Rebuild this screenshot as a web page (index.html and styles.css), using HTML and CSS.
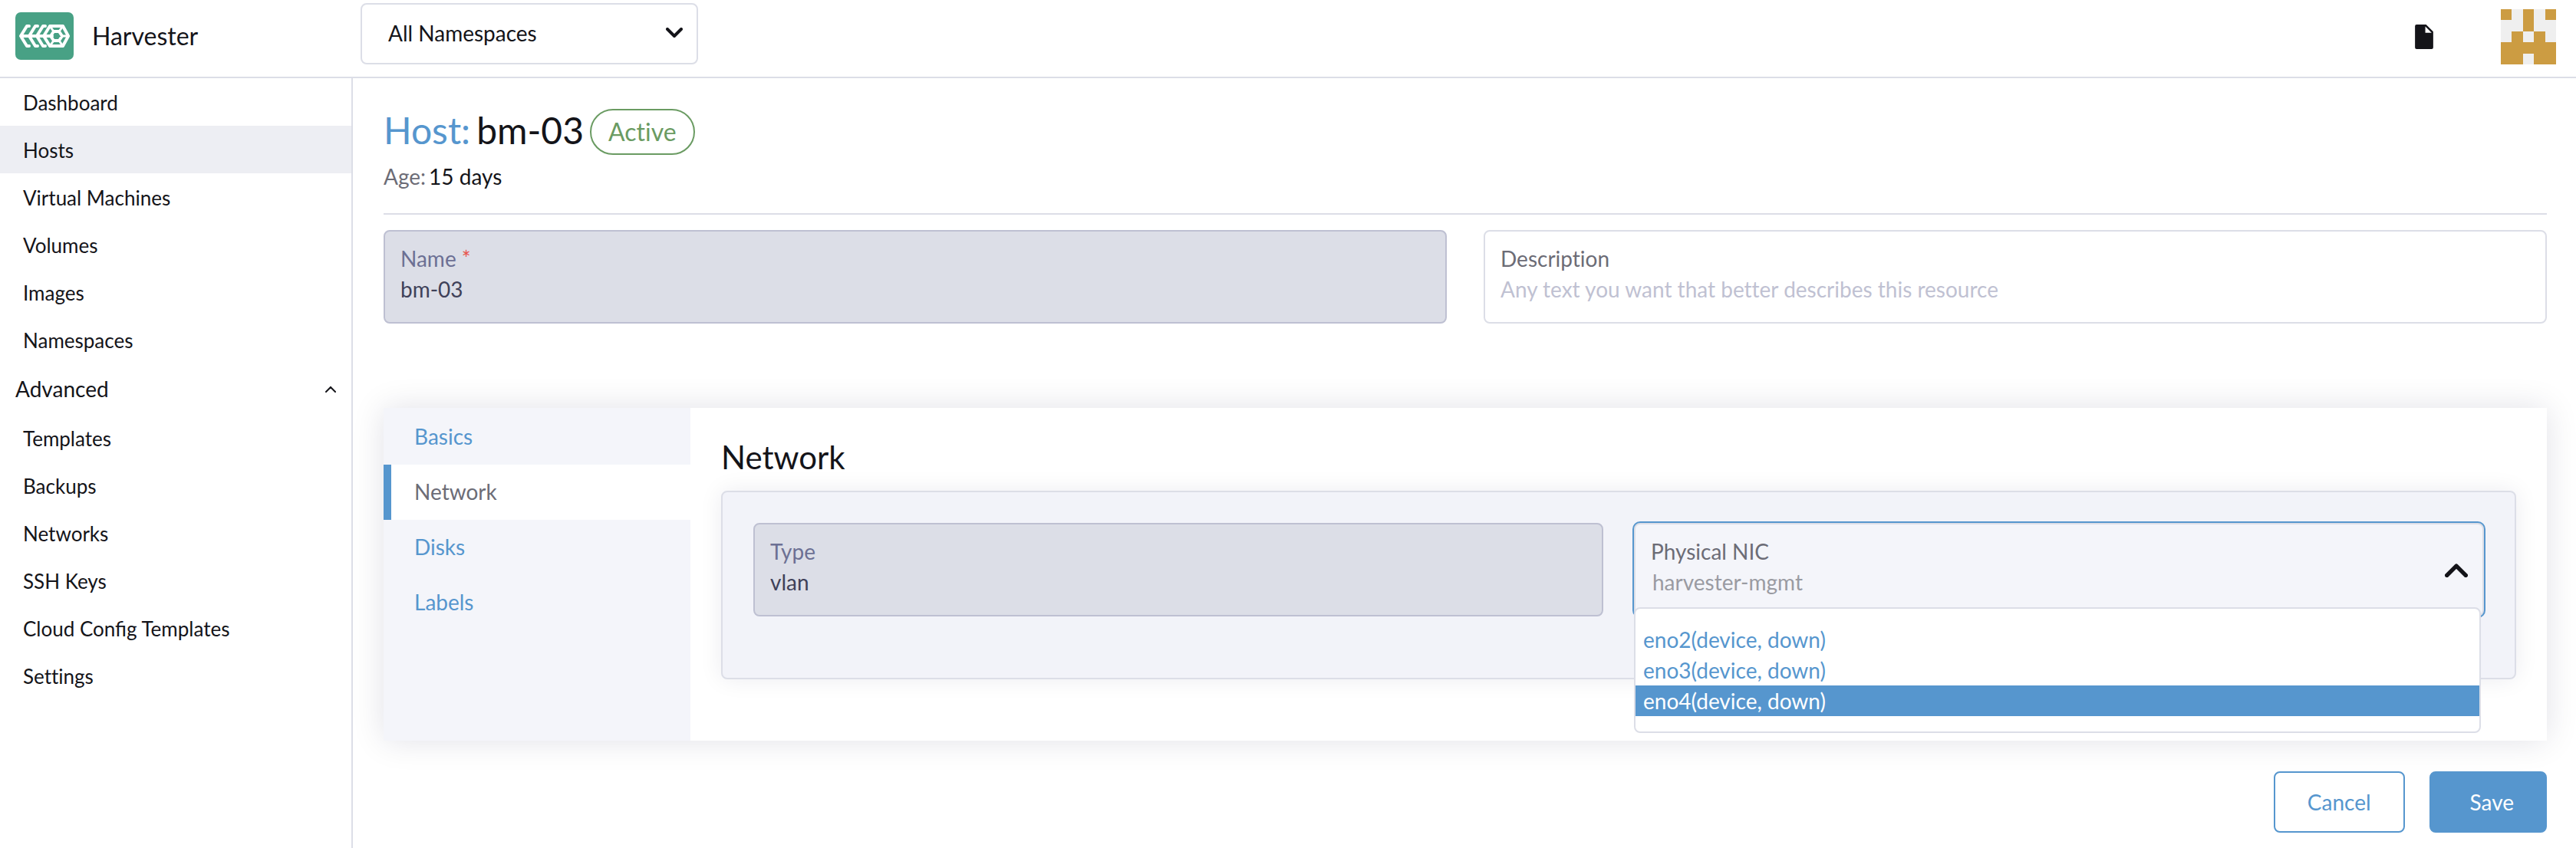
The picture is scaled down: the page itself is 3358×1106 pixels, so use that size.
FILE: index.html
```html
<!DOCTYPE html>
<html lang="en">
<head>
<meta charset="utf-8">
<title>Harvester - Host bm-03</title>
<link rel="stylesheet" href="styles.css">
</head>
<body>
<header class="topbar">
  <a class="brand" href="#">
    <svg class="brand-logo" viewBox="0 0 76 62" aria-hidden="true">
      <rect width="76" height="62" rx="7" fill="#48a185"/>
      <g fill="none" stroke="#fff" stroke-width="4" stroke-linecap="round" stroke-linejoin="round">
        <path d="M7 31H48M18 18H15L7 31L15 44H18M29 18H26L18 31L26 44H29M39 18H36L28 31L36 44H39"/>
        <path d="M45 18H62L69 31L62 44H45L37 31Z"/>
        <path d="M50 25H57L61 31L57 37H50L46 31Z"/>
        <path d="M45 18L50 25M62 18L57 25M62 44L57 37M45 44L50 37M61 31H69" stroke-width="3"/>
      </g>
    </svg>
    <span>Harvester</span>
  </a>
  <div class="namespace">
    <select class="namespace-select" aria-label="Namespace"><option>All Namespaces</option></select>
    <svg class="chevron" viewBox="0 0 22 14" aria-hidden="true"><path d="M2 2L11 11L20 2"/></svg>
  </div>
  <div class="tools">
    <a class="docs" href="#" aria-label="Documentation">
      <svg viewBox="0 0 23 31" aria-hidden="true"><path fill="#141419" fill-rule="evenodd" d="M2 0H14L23 9V29Q23 31 21 31H2Q0 31 0 29V2Q0 0 2 0ZM13 2.500V10.500H21Z"/></svg>
    </a>
    <svg class="avatar" viewBox="0 0 5 5" shape-rendering="crispEdges" role="img" aria-label="User">
      <rect width="5" height="5" fill="#efefef"/>
      <path fill="#cc9c42" d="M0 0H1V1H0ZM2 0H3V2H2ZM4 0H5V1H4ZM1 2H2V3H3V2H4V3H5V5H3V4H2V5H0V3H1Z"/>
    </svg>
  </div>
</header>
<div class="layout">
  <nav class="sidenav" aria-label="Main">
    <a href="#">Dashboard</a>
    <a class="current" href="#">Hosts</a>
    <a href="#">Virtual Machines</a>
    <a href="#">Volumes</a>
    <a href="#">Images</a>
    <a href="#">Namespaces</a>
    <button class="group-toggle" type="button" aria-expanded="true">
      <span>Advanced</span>
      <svg viewBox="0 0 14 9" aria-hidden="true"><path d="M1 8L7 2L13 8"/></svg>
    </button>
    <a href="#">Templates</a>
    <a href="#">Backups</a>
    <a href="#">Networks</a>
    <a href="#">SSH Keys</a>
    <a class="ligatures" href="#">Cloud Config Templates</a>
    <a href="#">Settings</a>
  </nav>
  <main class="content">
    <div class="masthead">
      <h1><a href="#">Host:</a><span>bm-03</span></h1>
      <span class="badge">Active</span>
    </div>
    <p class="age"><span class="age-label">Age:</span><span>15 days</span></p>
    <form>
      <div class="fields identity">
        <div class="field disabled">
          <label for="name">Name <span class="required">*</span></label>
          <input id="name" value="bm-03" disabled>
        </div>
        <div class="field">
          <label for="description">Description</label>
          <input id="description" placeholder="Any text you want that better describes this resource">
        </div>
      </div>
      <section class="tabbed">
        <div class="tabs">
          <a href="#">Basics</a>
          <a class="active" href="#">Network</a>
          <a href="#">Disks</a>
          <a href="#">Labels</a>
        </div>
        <div class="panel">
          <h2>Network</h2>
          <div class="fields group">
            <div class="field disabled">
              <label for="type">Type</label>
              <input id="type" value="vlan" disabled>
            </div>
            <div class="field open">
              <label for="nic">Physical NIC</label>
              <select id="nic"><option>harvester-mgmt</option></select>
              <svg class="chevron" viewBox="0 0 22 14" aria-hidden="true"><path d="M2 12L11 3L20 12"/></svg>
              <ul class="menu" role="listbox" aria-label="Physical NIC">
                <li role="option">eno2(device, down)</li>
                <li role="option">eno3(device, down)</li>
                <li class="highlight" role="option" aria-selected="true">eno4(device, down)</li>
              </ul>
            </div>
          </div>
        </div>
      </section>
      <div class="actions">
        <button class="btn cancel" type="button">Cancel</button>
        <button class="btn save" type="button">Save</button>
      </div>
    </form>
  </main>
</div>
</body>
</html>
```
FILE: styles.css
```css
:root {
  --text: #141419;
  --muted: #6c6c76;
  --link: #5696ce;
  --border: #dcdee7;
  --panel: #f4f5fa;
}

* {
  box-sizing: border-box;
}

body {
  margin: 0;
  min-height: 100vh;
  display: flex;
  flex-direction: column;
  background: #fff;
  color: var(--text);
  font: 28px/40px Lato, sans-serif;
  font-variant-ligatures: none;
}

a {
  color: var(--link);
  text-decoration: none;
}

h1,
h2,
p,
ul {
  margin: 0;
  padding: 0;
  font-weight: 400;
}

input,
select,
button {
  font: inherit;
  font-variant-ligatures: none;
  color: inherit;
}

.topbar {
  display: flex;
  align-items: flex-start;
  height: 102px;
  border-bottom: 2px solid var(--border);
}

.brand {
  display: flex;
  align-items: center;
  gap: 24px;
  width: 470px;
  padding: 16px 20px;
  color: var(--text);
  font-size: 32px;
}

.brand-logo {
  width: 76px;
  height: 62px;
}

.namespace {
  position: relative;
  width: 440px;
  margin-top: 4px;
}

.namespace-select {
  appearance: none;
  display: block;
  width: 100%;
  height: 80px;
  padding: 0 34px 2px;
  border: 2px solid var(--border);
  border-radius: 8px;
  background: #fff;
}

.chevron {
  position: absolute;
  fill: none;
  stroke: var(--text);
  stroke-width: 4;
  stroke-linecap: round;
  stroke-linejoin: round;
  pointer-events: none;
}

.namespace .chevron {
  top: 32px;
  right: 20px;
  width: 22px;
}

.tools {
  display: flex;
  align-items: center;
  gap: 88px;
  margin-left: auto;
  padding: 12px 26px 0 0;
}

.docs svg {
  display: block;
  width: 24px;
  height: 32px;
}

.avatar {
  width: 72px;
  height: 72px;
}

.layout {
  display: flex;
  flex: 1;
}

.sidenav {
  flex: 0 0 460px;
  border-right: 2px solid var(--border);
  font-size: 26px;
}

.sidenav a {
  display: block;
  padding: 2px 30px 0;
  color: var(--text);
  line-height: 60px;
}

.sidenav .current {
  background: #edeef3;
}

.ligatures {
  font-variant-ligatures: normal;
}

.group-toggle {
  display: flex;
  align-items: center;
  justify-content: space-between;
  width: 100%;
  height: 66px;
  padding: 0 20px;
  border: 0;
  background: none;
  font-size: 28px;
}

.group-toggle svg {
  width: 14px;
  fill: none;
  stroke: var(--text);
  stroke-width: 2;
  stroke-linecap: round;
}

.content {
  flex: 1;
  min-width: 0;
  padding: 40px 38px 20px 40px;
}

.masthead {
  display: flex;
  align-items: center;
  gap: 8px;
}

h1 {
  display: flex;
  gap: 8px;
  padding-bottom: 4px;
  font-size: 48px;
  line-height: 56px;
}

.badge {
  padding: 0 22px;
  border: 2px solid #6a9b62;
  border-radius: 30px;
  color: #6a9b62;
  font-size: 32px;
  line-height: 56px;
}

.age {
  display: flex;
  gap: 4px;
  padding: 8px 0 28px;
  border-bottom: 2px solid var(--border);
}

.age-label {
  color: var(--muted);
}

.fields {
  display: grid;
  grid-template-columns: 1fr 1fr;
}

.identity {
  gap: 48px;
  margin: 20px 0 110px;
}

.field {
  position: relative;
  padding: 15px 20px 23px;
  border: 2px solid var(--border);
  border-radius: 8px;
}

.field label {
  display: block;
  color: var(--muted);
}

.field input,
.field select {
  appearance: none;
  display: block;
  width: 100%;
  height: 40px;
  padding: 0;
  border: 0;
  background: none;
  opacity: 1;
}

.field input::placeholder {
  color: #bfc1d2;
}

.disabled {
  border-color: #bec0d2;
  background: #dcdee7;
}

.disabled label {
  color: #6c7094;
}

.disabled input {
  color: #3f4159;
}

.field .required {
  color: #e8544d;
}

.tabbed {
  display: flex;
  background: #fff;
  box-shadow: 0 0 40px rgba(20, 20, 60, 0.12);
}

.tabs {
  flex: 0 0 400px;
  padding-top: 2px;
  background: var(--panel);
}

.tabs a {
  display: block;
  padding: 0 0 2px 40px;
  line-height: 70px;
}

.tabs .active {
  padding-left: 30px;
  border-left: 10px solid var(--link);
  background: #fff;
  color: var(--muted);
}

.panel {
  flex: 1;
  padding: 40px 40px 80px;
}

h2 {
  margin-bottom: 20px;
  font-size: 42px;
  line-height: 48px;
}

.group {
  gap: 40px;
  padding: 40px 40px 80px;
  border: 2px solid var(--border);
  border-radius: 8px;
  background: #f2f3f9;
  box-shadow: 0 0 30px rgba(20, 20, 60, 0.08);
}

.open {
  background: var(--panel);
  box-shadow: 0 0 0 2px var(--link);
}

.field select {
  height: 36px;
  padding-left: 2px;
  color: #9a9ba2;
}

.open .chevron {
  top: 50px;
  right: 19px;
  width: 30px;
}

.menu {
  position: absolute;
  z-index: 1;
  top: 108px;
  left: -2px;
  right: 2px;
  padding: 20px 0;
  border: 2px solid var(--border);
  border-radius: 8px;
  background: #fff;
  color: var(--link);
  list-style: none;
}

.menu li {
  padding: 0 10px;
}

.menu .highlight {
  background: var(--link);
  color: #fff;
}

.actions {
  display: flex;
  justify-content: flex-end;
  gap: 32px;
  margin-top: 40px;
}

.btn {
  height: 80px;
  padding: 0 42px;
  border: 2px solid var(--link);
  border-radius: 8px;
  background: #fff;
  color: var(--link);
}

.save {
  padding: 0 41px 0 51px;
  background: var(--link);
  color: #fff;
}
```
